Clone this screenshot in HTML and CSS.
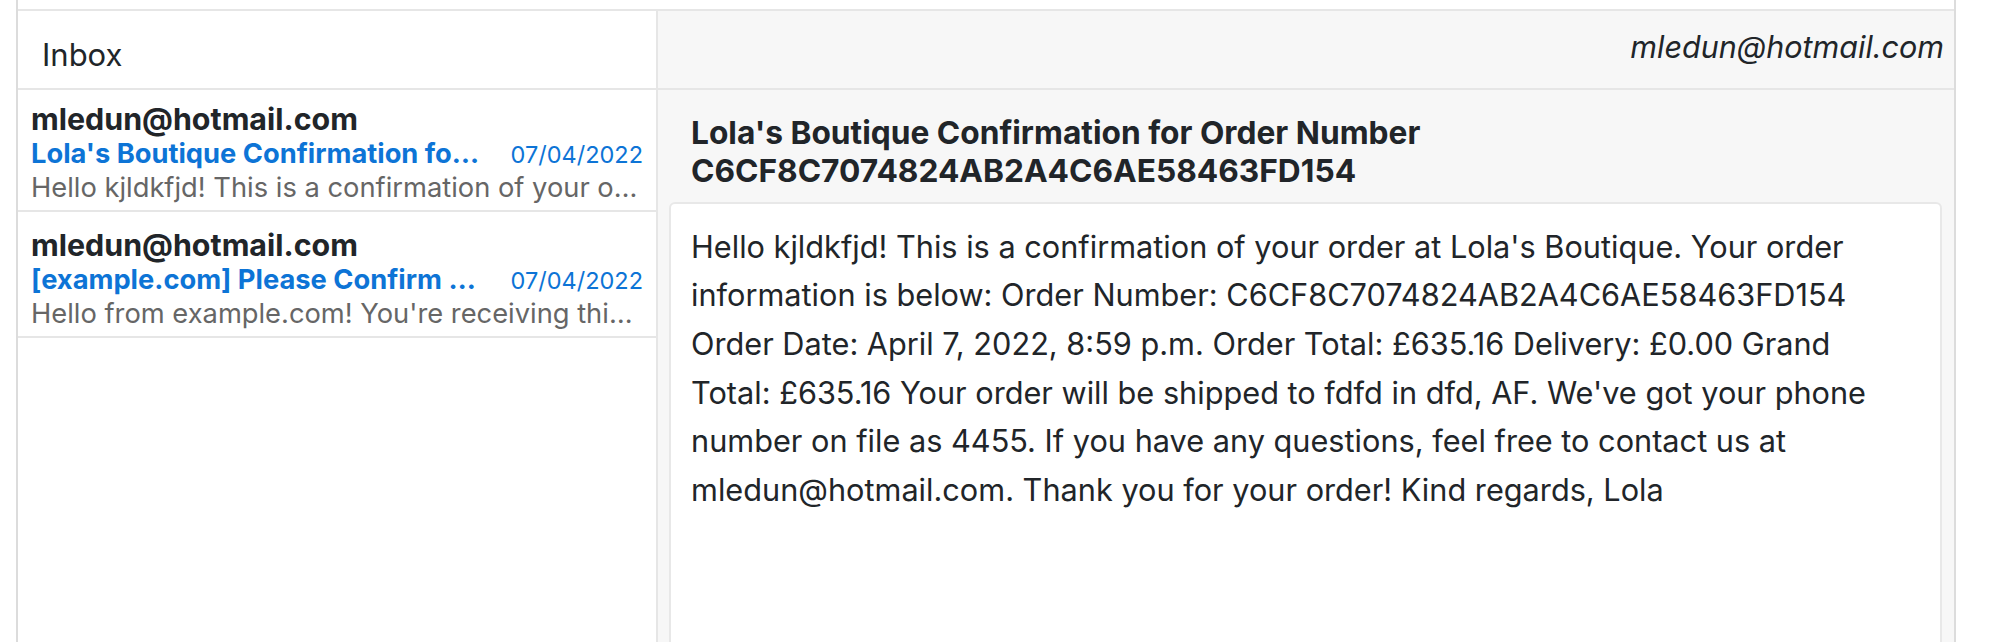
FILE: index.html
```html
<!DOCTYPE html>
<html lang="en">
<head>
<meta charset="utf-8">
<title>Inbox</title>
<link rel="stylesheet" href="styles.css">
</head>
<body>
<div class="app">
  <div class="mail">
    <div class="mail-head">
      <div class="head-left">Inbox</div>
      <div class="head-right">mledun@hotmail.com</div>
    </div>
    <div class="mail-body">
      <ul class="list">
        <li class="item">
          <div class="from">mledun@hotmail.com</div>
          <div class="subject-row">
            <span class="subject">Lola's Boutique Confirmation for Order Number C6CF8C7074824AB2A4C6AE58463FD154</span>
            <span class="date">07/04/2022</span>
          </div>
          <div class="preview">Hello kjldkfjd! This is a confirmation of your order at Lola's Boutique. Your order information is below.</div>
        </li>
        <li class="item">
          <div class="from">mledun@hotmail.com</div>
          <div class="subject-row">
            <span class="subject">[example.com] Please Confirm Your E-mail Address</span>
            <span class="date">07/04/2022</span>
          </div>
          <div class="preview">Hello from example.com! You're receiving this e-mail because user has given your e-mail address to register an account.</div>
        </li>
      </ul>
      <div class="reader">
        <h2 class="reader-subject">Lola's Boutique Confirmation for Order Number C6CF8C7074824AB2A4C6AE58463FD154</h2>
        <div class="reader-card">
          <p class="reader-text">Hello kjldkfjd! This is a confirmation of your order at Lola's Boutique. Your order<br>
information is below: Order Number: C6CF8C7074824AB2A4C6AE58463FD154<br>
Order Date: April 7, 2022, 8:59 p.m. Order Total: £635.16 Delivery: £0.00 Grand<br>
Total: £635.16 Your order will be shipped to fdfd in dfd, AF. We've got your phone<br>
number on file as 4455. If you have any questions, feel free to contact us at<br>
mledun@hotmail.com. Thank you for your order! Kind regards, Lola</p>
        </div>
      </div>
    </div>
  </div>
</div>
</body>
</html>
```

FILE: styles.css
```css
* { box-sizing: border-box; }

html, body {
  margin: 0;
  padding: 0;
  height: 100%;
  background: #ffffff;
}

body {
  font-family: Inter, "Liberation Sans", sans-serif;
  color: #212529;
  overflow: hidden;
}

.app {
  margin-left: 16px;
  width: 1940px;
  height: 100vh;
  border-left: 2px solid #dcdcdc;
  border-right: 2px solid #dcdcdc;
  padding-top: 9px;
  display: flex;
  flex-direction: column;
}

.mail {
  border-top: 2px solid #e6e6e6;
  flex: 1;
  display: flex;
  flex-direction: column;
  min-height: 0;
}

.mail-head {
  display: grid;
  grid-template-columns: 640px 1fr;
  height: 79px;
  border-bottom: 2px solid #e6e6e6;
}

.head-left {
  border-right: 2px solid #e6e6e6;
  background: #ffffff;
  padding: 26px 0 0 24px;
  font-size: 31px;
  line-height: 36px;
}

.head-right {
  background: #f7f7f7;
  padding: 18px 10px 0 0;
  text-align: right;
  font-size: 30.5px;
  line-height: 36px;
  font-style: italic;
}

.mail-body {
  flex: 1;
  display: grid;
  grid-template-columns: 640px 1fr;
  min-height: 0;
}

.list {
  list-style: none;
  margin: 0;
  padding: 0;
  border-right: 2px solid #e6e6e6;
  background: #ffffff;
}

.item {
  padding: 15px 13px 6px 13px;
  border-bottom: 2px solid #e6e6e6;
}

.item:first-child {
  padding-top: 11px;
}

.from {
  font-size: 30.4px;
  font-weight: 700;
  line-height: 36px;
  white-space: nowrap;
}

.subject-row {
  display: flex;
  align-items: baseline;
  color: #0d74d6;
  line-height: 34px;
}

.subject {
  flex: 1;
  min-width: 0;
  font-size: 27.3px;
  font-weight: 700;
  white-space: nowrap;
  overflow: hidden;
  text-overflow: ellipsis;
}

.date {
  margin-left: 24px;
  font-size: 23.5px;
  white-space: nowrap;
}

.preview {
  color: #666666;
  font-size: 27.3px;
  line-height: 32px;
  white-space: nowrap;
  overflow: hidden;
  text-overflow: ellipsis;
}

.reader {
  background: #f7f7f7;
  padding: 24px 12px 0 11px;
  display: flex;
  flex-direction: column;
  min-height: 0;
}

.reader-subject {
  margin: 0 0 11px 0;
  padding: 0 0 0 22px;
  font-size: 31.7px;
  font-weight: 700;
  line-height: 38.4px;
}

.reader-card {
  flex: 1;
  background: #ffffff;
  border: 2px solid #e8e8e8;
  border-bottom: none;
  border-radius: 6px 6px 0 0;
  padding: 19px 20px 20px 20px;
}

.reader-text {
  margin: 0;
  font-size: 30.7px;
  line-height: 48.6px;
}
```
